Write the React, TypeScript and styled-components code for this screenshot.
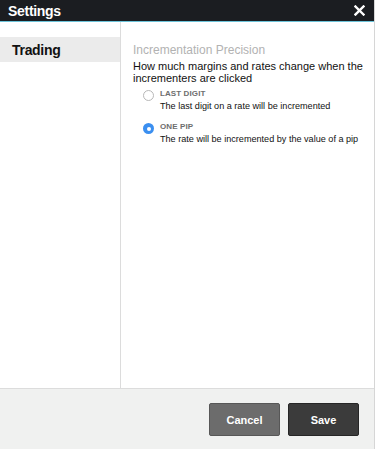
import React, { useState } from "react";
import styled, { createGlobalStyle } from "styled-components";

const Global = createGlobalStyle`
  html, body { margin: 0; padding: 0; background: #ffffff; }
  body { font-family: "Liberation Sans", Arial, sans-serif; }
  #root { height: 449px; }
  * { box-sizing: border-box; }
`;

const Dialog = styled.div`
  width: 375px;
  height: 449px;
  display: flex;
  flex-direction: column;
  background: #fff;
  border-right: 1px solid #d6d6d6;
`;

const Header = styled.div`
  height: 22px;
  flex: none;
  background: #1b1d21;
  border-bottom: 1px solid #6cc3d9;
  display: flex;
  align-items: center;
  justify-content: space-between;
  padding: 0 9px 0 8px;
`;

const Title = styled.div`
  color: #fff;
  font-weight: bold;
  font-size: 14px;
  letter-spacing: -0.3px;
`;

const Close = styled.button`
  background: none;
  border: none;
  padding: 0;
  width: 11px;
  height: 11px;
  display: flex;
  cursor: pointer;
`;

const Body = styled.div`
  flex: 1;
  display: flex;
  min-height: 0;
`;

const Sidebar = styled.div`
  width: 121px;
  flex: none;
  border-right: 1px solid #dcdcdc;
  padding-top: 15px;
`;

const NavItem = styled.div<{ $active?: boolean }>`
  height: 25px;
  display: flex;
  align-items: center;
  padding-left: 12px;
  font-size: 14px;
  font-weight: bold;
  color: #111;
  letter-spacing: -0.3px;
  background: ${(p) => (p.$active ? "#ebebeb" : "transparent")};
`;

const Content = styled.div`
  flex: 1;
  padding: 21px 6px 0 12px;
`;

const SectionTitle = styled.div`
  color: #b2b2b2;
  font-size: 12px;
  line-height: 14px;
  margin-bottom: 3px;
`;

const Description = styled.div`
  color: #111;
  font-size: 11px;
  line-height: 12px;
  margin-bottom: 4px;
`;

const Options = styled.div`
  display: flex;
  flex-direction: column;
  gap: 7px;
  padding-left: 10px;
`;

const Option = styled.label`
  display: flex;
  align-items: flex-start;
  gap: 6px;
  cursor: pointer;
`;

const Radio = styled.span<{ $checked: boolean }>`
  width: 11px;
  height: 11px;
  margin-top: 2px;
  border-radius: 50%;
  flex: none;
  border: ${(p) => (p.$checked ? "none" : "1px solid #b8b8b8")};
  background: ${(p) => (p.$checked ? "#3b8ff0" : "#fff")};
  display: flex;
  align-items: center;
  justify-content: center;
  &::after {
    content: "";
    width: 4px;
    height: 4px;
    border-radius: 50%;
    background: #fff;
    display: ${(p) => (p.$checked ? "block" : "none")};
  }
`;

const OptionText = styled.div`
  display: flex;
  flex-direction: column;
`;

const OptionLabel = styled.div`
  font-size: 8px;
  font-weight: bold;
  color: #6e6e6e;
  text-transform: uppercase;
  line-height: 11px;
  letter-spacing: 0.1px;
`;

const OptionDesc = styled.div`
  font-size: 9.1px;
  color: #111;
  line-height: 15px;
  white-space: nowrap;
`;

const Footer = styled.div`
  height: 61px;
  flex: none;
  background: #f0f1f0;
  border-top: 1px solid #dcdcdc;
  display: flex;
  justify-content: flex-end;
  align-items: flex-start;
  padding: 14px 15px 0 0;
  gap: 8px;
`;

const Button = styled.button<{ $variant: "secondary" | "primary" }>`
  width: 71px;
  height: 33px;
  border-radius: 2px;
  border: 1px solid ${(p) => (p.$variant === "primary" ? "#262626" : "#575757")};
  background: ${(p) => (p.$variant === "primary" ? "#3b3b3b" : "#6c6c6c")};
  color: #fff;
  font-family: "Liberation Sans", Arial, sans-serif;
  font-weight: bold;
  font-size: 11px;
  cursor: pointer;
`;

export default function App() {
  const [mode, setMode] = useState("pip");
  const options = [
    { id: "digit", label: "Last digit", desc: "The last digit on a rate will be incremented" },
    { id: "pip", label: "One pip", desc: "The rate will be incremented by the value of a pip" },
  ];
  return (
    <>
      <Global />
      <Dialog>
        <Header>
          <Title>Settings</Title>
          <Close aria-label="Close">
            <svg width="11" height="11" viewBox="0 0 11 11">
              <path d="M1.5 1.5 L9.5 9.5 M9.5 1.5 L1.5 9.5" stroke="#fff" strokeWidth="2.4" strokeLinecap="square" />
            </svg>
          </Close>
        </Header>
        <Body>
          <Sidebar>
            <NavItem $active>Trading</NavItem>
          </Sidebar>
          <Content>
            <SectionTitle>Incrementation Precision</SectionTitle>
            <Description>
              How much margins and rates change when the incrementers are clicked
            </Description>
            <Options>
              {options.map((o) => (
                <Option key={o.id} onClick={() => setMode(o.id)}>
                  <Radio $checked={mode === o.id} />
                  <OptionText>
                    <OptionLabel>{o.label}</OptionLabel>
                    <OptionDesc>{o.desc}</OptionDesc>
                  </OptionText>
                </Option>
              ))}
            </Options>
          </Content>
        </Body>
        <Footer>
          <Button $variant="secondary">Cancel</Button>
          <Button $variant="primary">Save</Button>
        </Footer>
      </Dialog>
    </>
  );
}
